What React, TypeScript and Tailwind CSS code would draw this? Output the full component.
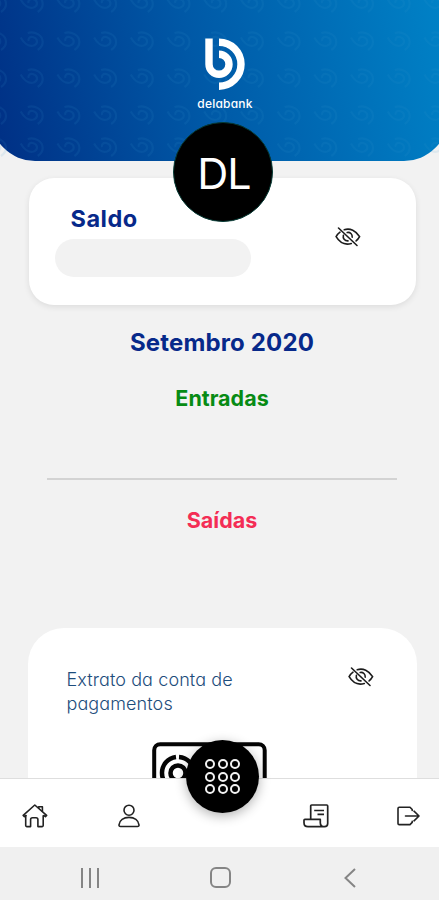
import type { ReactNode } from "react";

type IconProps = {
    className?: string;
};

function LogoMark({ className }: IconProps) {
    return (
        <svg className={className} viewBox="0 0 40 52" fill="none" stroke="currentColor" strokeWidth="7.4">
            <path d="M4 .5V26.3a10 10 0 1 0 10-10" />
            <path d="M14 4.2a22 22 0 0 1 0 44" />
        </svg>
    );
}

// marca d'água repetida no fundo do cabeçalho
function HeaderPattern() {
    const rows = [3, 41, 78, 115, 147];
    const cols = Array.from({ length: 13 }, (_, i) => -5 + i * 36.7);
    return (
        <svg className="absolute inset-y-0 left-[9px] h-full w-[439px]" viewBox="0 0 439 161" fill="none" stroke="#3a9ad0" strokeWidth="2.2" opacity="0.11">
            {rows.map((y) =>
                cols.map((x) => (
                    <g key={`${x}-${y}`} transform={`translate(${x} ${y})`}>
                        <path d="M-11 -3.500C-8 2 -3 6 2 4.500C7 2.500 6 -3 1 -4C-2 -4.500 -4 -2 -3 0" />
                        <path d="M-4 -8C3 -10 11 -6 11 1C11 5 9 7 6 9" />
                    </g>
                )),
            )}
        </svg>
    );
}

function EyeOffIcon({ className }: IconProps) {
    return (
        <svg className={className} viewBox="0 0 26 22" fill="none" stroke="#1c1c1c" strokeWidth="1.6" strokeLinecap="round">
            <path d="M3.5 2 22 19.5" />
            <path d="M9.2 3.7C15 1.8 21 4.5 24.6 10.7c-1 1.8-2.2 3.2-3.5 4.2" />
            <path d="M5 6.2C3.500 7.300 2.200 8.800 1.100 10.700c4 6.600 9.800 8.400 15.200 6.800" />
            <path d="M12.200 6.500c3-.5 5.300 1.700 5 4.700" />
            <path d="M8.400 9.300c-.8 3 1.200 5.700 4.600 5.600" />
        </svg>
    );
}

function HomeIcon() {
    return (
        <svg className="h-6 w-[26px]" viewBox="0 0 26 24" fill="none" stroke="#222" strokeWidth="1.6" strokeLinejoin="round" strokeLinecap="round">
            <path d="M4 11.500 2.400 12.600 1.200 11.400 12.800 1 24.600 11.400l-1.200 1.200-1.600-1.100" />
            <path d="M16.700 4.200v-1.500h3.700v4.800" />
            <path d="M3.700 11.700v9.900q0 1 1 1h3.900v-7q0-1.900 1.900-1.900h3.500q1.900 0 1.900 1.900v7h4.300q1 0 1-1v-9.900" />
        </svg>
    );
}

function UserIcon() {
    return (
        <svg className="h-6 w-[22px]" viewBox="0 0 22 24" fill="none" stroke="#222" strokeWidth="1.6" strokeLinejoin="round">
            <circle cx="11" cy="6.200" r="5" />
            <path d="M1 20.800c.6-4.500 4.500-7.400 10-7.400s9.400 2.900 10 7.400q.2 1.700-1.500 1.700h-17q-1.700 0-1.500-1.700z" />
        </svg>
    );
}

function ReceiptIcon() {
    return (
        <svg className="h-6 w-[26px]" viewBox="0 0 26 24" fill="none" stroke="#222" strokeWidth="1.7" strokeLinejoin="round">
            <path d="M7.700 15V2q0-1 1-1h15q1 0 1 1v17.500q0 3.200-3.200 3.200H5q-4 0-4-4v-2.400q0-.9.900-.9h15.400v3.300q0 3.900 4 4" />
            <path d="M11.200 6.500h9.800M14.500 10.300h6.500" />
        </svg>
    );
}

function LogoutIcon() {
    return (
        <svg className="h-5 w-[23px]" viewBox="0 0 23 20" fill="none" stroke="#222" strokeWidth="1.600" strokeLinejoin="round" strokeLinecap="round">
            <path d="M15.200 4.500V3.500L13 1.200H2.200q-1.200 0-1.200 1.200v15q0 1.200 1.200 1.200H13l2.200-2.200v-1" />
            <path d="M8.500 10h13M17 5.200 22 10l-5 4.800" />
        </svg>
    );
}

function MoneyIcon() {
    return (
        <svg className="h-[70px] w-[116px]" viewBox="0 0 116 70" fill="none" stroke="#050505" strokeWidth="4.5">
            <rect x="2.200" y="2.200" width="110.500" height="72" rx="6" strokeWidth="4" />
            <path d="M10 31a16 16 0 0 1 14-16M27 15a16 16 0 0 1 15 16 16 16 0 0 1-32 0" />
            <circle cx="26" cy="31" r="7.500" />
        </svg>
    );
}

function HiddenCard({ children, className }: { children: ReactNode; className: string }) {
    return <section className={"mx-auto flex bg-white " + className}>{children}</section>;
}

function Header() {
    return (
        <header className="relative -mx-[9px] flex h-[161px] shrink-0 flex-col items-center rounded-b-[44px] bg-linear-[78deg,#003186_3%,#0058a6_45%,#0081c6_98%] pt-[38px] text-white">
            <HeaderPattern />
            <LogoMark className="relative left-[5px] h-[52px] w-10" />
            <span className="relative mt-[6px] mr-[-11px] text-[12px] leading-4 font-medium tracking-[0.2px] [font-feature-settings:'cv11']">delabank</span>
            <div className="absolute top-[122px] left-[182px] z-10 flex size-[100px] items-center justify-center rounded-full border border-[#063b35] bg-black pt-0.5 pl-0.5 text-[43px] leading-none font-normal tracking-[-1px]">
                DL
            </div>
        </header>
    );
}

function TabBar() {
    return (
        <nav className="relative flex h-[69px] shrink-0 border-t border-[#dedede] bg-white">
            <button type="button" className="ml-[22px] flex w-[26px] items-center pt-1.5"><HomeIcon /></button>
            <button type="button" className="ml-[70px] flex w-[22px] items-center pt-1.5"><UserIcon /></button>
            <button type="button" className="ml-[163px] flex w-[26px] items-center pt-1.5"><ReceiptIcon /></button>
            <button type="button" className="ml-[68px] flex w-[23px] items-center pt-1.5"><LogoutIcon /></button>
            <button type="button" className="absolute -top-[39px] left-[186px] flex size-[73px] items-center justify-center rounded-full bg-black shadow-[0_3px_12px_rgba(0,0,0,0.3)]">
                <span className="grid grid-cols-3 gap-[2.5px]">
                    {Array.from({ length: 9 }, (_, i) => (
                        <span key={i} className="size-[10px] rounded-full border-2 border-[#f2f2f2]" />
                    ))}
                </span>
            </button>
        </nav>
    );
}

function SystemBar() {
    return (
        <footer className="flex h-[53px] shrink-0 items-center bg-[#f0f0f0] pt-2">
            <span className="ml-[81px] flex gap-[6px]">
                <i className="h-5 w-[2px] bg-[#858585]" />
                <i className="h-5 w-[2px] bg-[#858585]" />
                <i className="h-5 w-[2px] bg-[#858585]" />
            </span>
            <span className="ml-[111px] h-[21px] w-[21px] rounded-[6px] border-2 border-[#858585]" />
            <svg className="ml-[113px] h-[20px] w-3" viewBox="0 0 12 20" fill="none" stroke="#858585" strokeWidth="2">
                <path d="M11 1 1.500 10 11 19" />
            </svg>
        </footer>
    );
}

export default function App() {
    return (
        <div className="flex h-[900px] w-[439px] flex-col overflow-hidden bg-[#f2f2f2] font-['Inter','Liberation_Sans',sans-serif]">
            <Header />
            <main className="flex min-h-0 flex-1 flex-col overflow-hidden pt-[17px] pl-[5px]">
                <HiddenCard className="h-[127px] w-[387px] shrink-0 justify-between rounded-[25px] pr-[55px] pl-[26px] shadow-[0_2px_6px_rgba(0,0,0,0.09)]">
                    <div>
                        <h2 className="mt-[27px] ml-4 text-[23.500px] leading-7 font-bold tracking-[0.5px] text-[#07298a]">Saldo</h2>
                        <div className="mt-[6px] h-[38px] w-[196px] rounded-full bg-[#f2f2f2]" />
                    </div>
                    <EyeOffIcon className="mt-[48px] h-[22px] w-[26px]" />
                </HiddenCard>

                <div className="flex shrink-0 flex-col items-center text-center">
                    <h1 className="mt-[22px] text-[24px] leading-8 font-bold tracking-[0.15px] text-[#07298a]">Setembro 2020</h1>
                    <h2 className="mt-[25px] text-[21.500px] leading-7 font-bold text-[#078b14]">Entradas</h2>
                    <hr className="mt-[66px] w-[350px] border-t-2 border-[#d3d3d3]" />
                    <h2 className="mt-[26px] text-[21.500px] leading-7 font-bold text-[#f42d55]">Saídas</h2>
                </div>

                <HiddenCard className="relative mt-[94px] h-[260px] w-[389px] shrink-0 flex-col rounded-[36px]">
                    <div className="flex h-[114px] justify-between pr-[43px] pl-[39px]">
                        <p className="mt-[40px] w-[200px] text-[18px] leading-6 font-light tracking-[0.1px] text-[#1d4d7c] [font-feature-settings:'cv11']">
                            Extrato da conta de pagamentos
                        </p>
                        <EyeOffIcon className="mt-[38px] h-[22px] w-[26px]" />
                    </div>
                    <div className="ml-[124px]"><MoneyIcon /></div>
                </HiddenCard>
            </main>
            <TabBar />
            <SystemBar />
        </div>
    );
}
